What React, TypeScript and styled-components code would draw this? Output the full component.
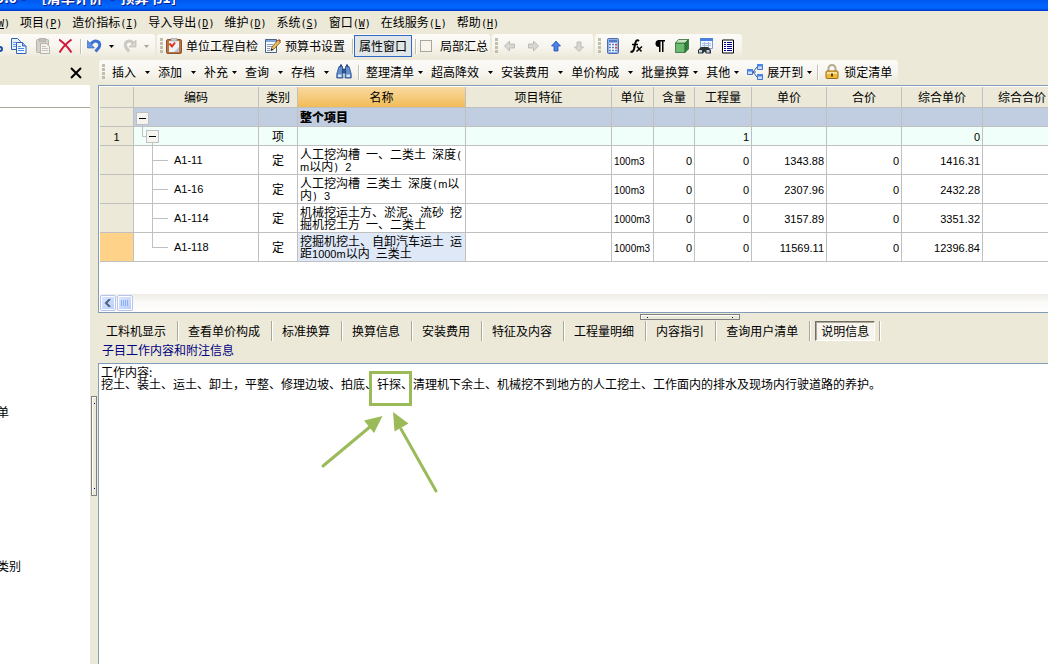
import React from "react";
import styled, { createGlobalStyle, css } from "styled-components";

const CJK = '"Noto Sans CJK SC", "Liberation Sans", sans-serif';
const LINE = "#c0c0c0";
const FACE = "#ece9d8";
const EDGE = "#7f9db9";

const GlobalStyle = createGlobalStyle`
  * { box-sizing: border-box; }
  html, body { margin: 0; height: 100%; overflow: hidden; }
  #root { height: 100%; }
  body { font: 12px/16px ${CJK}; color: #000; background: ${FACE}; }
  button { font: inherit; color: inherit; border: 0; background: none; padding: 0; margin: 0; white-space: nowrap; }
  svg { display: block; flex: none; }
`;

const Window = styled.div`
  display: flex;
  flex-direction: column;
  height: 100%;
  overflow: hidden;
`;

const TitleBar = styled.header`
  flex: none;
  display: flex;
  align-items: flex-end;
  height: 11px;
  overflow: hidden;
  background: linear-gradient(#0058ee 0%, #0066ff 55%, #0062fa 75%, #0038c8 100%);
`;

const Title = styled.h1`
  margin: 0 0 6px -4px;
  font-size: 14px;
  line-height: 16px;
  font-weight: 700;
  color: #fff;
  text-shadow: 1px 1px 0 #0a1883;
  white-space: pre;
  display: flex;
  gap: 16px;
`;

const MenuBar = styled.nav`
  flex: none;
  display: flex;
  gap: 10px;
  height: 23px;
  padding-bottom: 2px;
  margin-left: -8px;
  align-items: center;
`;

const Mono = styled.span`
  font: 10px/8px "DejaVu Sans Mono", monospace;
  white-space: pre-wrap;
`;

const Digits = styled.span<{ $small?: boolean }>`
  font: ${(p) => (p.$small ? 10 : 11)}px/8px "Liberation Sans", sans-serif;
`;

const ToolRow = styled.div<{ $last?: boolean }>`
  flex: none;
  display: flex;
  gap: 2px;
  height: 25px;
  margin-bottom: ${(p) => (p.$last ? 0 : 1)}px;
  overflow: hidden;
`;

const ToolGroup = styled.div<{ $bleed?: boolean }>`
  flex: none;
  display: flex;
  align-items: center;
  height: 100%;
  padding: 0 2px 1px 3px;
  border-radius: 3px;
  background: linear-gradient(#fcfbf8, #f7f5ee 50%, #ebe8d8);
  ${(p) => p.$bleed && css`margin-left: -17px; padding-left: 0;`}
`;

const Grip = styled.span<{ $gap?: number }>`
  width: 3px;
  height: 16px;
  margin-right: ${(p) => p.$gap ?? 1}px;
  background: repeating-linear-gradient(#c1bea9 0 3px, transparent 3px 4px);
`;

const Divider = styled.span<{ $space?: number }>`
  width: 2px;
  height: 15px;
  margin: 0 ${(p) => p.$space ?? 1}px;
  background: #c5c2b4;
  border-right: 1px solid #fff;
`;

const IconButton = styled.button<{ $compact?: boolean }>`
  padding: 0 4px 0 ${(p) => (p.$compact ? 3 : 4)}px;
`;

const LabelButton = styled.button`
  display: flex;
  align-items: center;
  gap: 4px;
  padding-right: 7px;
`;

const ToggleButton = styled.button`
  height: 22px;
  padding: 0 4px;
  margin-right: 3px;
  border: 1px solid #316ac5;
  background: #e1e6e8;
`;

const CheckLabel = styled.label`
  display: flex;
  align-items: center;
  gap: 8px;
  margin-left: 3px;
`;

const CheckBox = styled.input`
  appearance: none;
  width: 12px;
  height: 12px;
  margin: 0;
  border: 1px solid #aca899;
  background: #f6f4ec;
`;

const DropButton = styled.button<{ $wide?: boolean }>`
  display: flex;
  align-items: center;
  gap: ${(p) => (p.$wide ? 9 : 4)}px;
  padding: 0 4px;
`;

const ArrowButton = styled.button`
  padding: 0 4px 0 2px;
`;

const DockTitle = styled.div`
  flex: none;
  display: flex;
  align-items: center;
  justify-content: flex-end;
  width: 97px;
  padding-right: 15px;
`;

const Body = styled.main`
  flex: 1;
  display: flex;
  min-height: 0;
`;

const Dock = styled.aside`
  flex: none;
  width: 90px;
  background: #fff;
  overflow: hidden;
`;

const DockHead = styled.div`
  height: 23px;
  border-bottom: 1px solid #aca899;
`;

const DockList = styled.ul`
  list-style: none;
  margin: 0 0 0 -3px;
  padding: 296px 0 0;
  display: flex;
  flex-direction: column;
  gap: 138px;
`;

const VSplitter = styled.div`
  flex: none;
  width: 8px;
  padding: 311px 1px 0;
`;

const SplitGrip = styled.span<{ $vertical?: boolean }>`
  display: flex;
  flex-direction: ${(p) => (p.$vertical ? "column" : "row")};
  justify-content: space-between;
  align-items: center;
  width: ${(p) => (p.$vertical ? "6px" : "100px")};
  height: ${(p) => (p.$vertical ? "100px" : "6px")};
  padding: ${(p) => (p.$vertical ? "6px 0" : "0 6px")};
  border: 1px solid #808080;
  background: #ebe9d8;
  box-shadow: inset 1px 1px 0 #fff;
  &::before, &::after { content: ""; width: 1px; height: 1px; background: #000080; }
`;

const Work = styled.section`
  flex: 1;
  min-width: 0;
  display: flex;
  flex-direction: column;
`;

const GridPane = styled.div`
  flex: none;
  display: flex;
  flex-direction: column;
  justify-content: space-between;
  height: 228px;
  padding: 1px 0 1px 1px;
  border: 1px solid ${EDGE};
  border-right: 0;
  background: #fff;
  overflow: hidden;
`;

const Sheet = styled.table`
  table-layout: fixed;
  width: 100%;
  min-width: 962px;
  border-collapse: separate;
  border-spacing: 0;
`;

const HeadCell = styled.th<{ $active?: boolean }>`
  height: 21px;
  padding: 0 0 1px;
  font-weight: 400;
  line-height: 16px;
  border: 0 solid ${LINE};
  border-width: 0 1px 1px 0;
  background: ${(p) => (p.$active ? "linear-gradient(#fadaa0, #f0bc58)" : FACE)};
`;

type Tone = "group" | "item" | "plain";
const tones: Record<Tone, string> = { group: "#c1cde0", item: "#f0fffa", plain: "#fff" };

const Row = styled.tr<{ $tone: Tone }>`
  height: ${(p) => (p.$tone === "plain" ? 29 : 19)}px;
  background: ${(p) => tones[p.$tone]};
`;

const Cell = styled.td<{ $align?: string; $fill?: string; $flush?: boolean }>`
  padding: ${(p) => (p.$flush ? "0" : "0 2px")};
  line-height: 12px;
  white-space: nowrap;
  overflow: hidden;
  text-align: ${(p) => p.$align ?? "left"};
  background: ${(p) => p.$fill ?? "transparent"};
  border: 0 solid ${LINE};
  border-width: 0 1px 1px 0;
`;

const GroupName = styled.strong`
  font-weight: 900;
`;

const TreeNode = styled.div`
  display: flex;
  align-items: center;
  gap: 6px;
`;

const ScrollBar = styled.div`
  flex: none;
  display: flex;
  align-items: center;
  gap: 1px;
  height: 17px;
  background: linear-gradient(#efede5, #fbfaf8 50%, #fefefc);
`;

const ScrollButton = styled.button`
  display: grid;
  place-items: center;
  width: 16px;
  height: 16px;
  border: 1px solid #b4c6ee;
  border-radius: 2px;
  background: linear-gradient(135deg, #dce7fe, #b9cdf9);
  box-shadow: inset 0 0 0 1px #fff;
`;

const HSplitter = styled.div`
  flex: none;
  height: 8px;
  padding: 1px 0 0 57%;
`;

const Tabs = styled.div`
  flex: none;
  display: flex;
  align-items: center;
  height: 20px;
  padding-left: 8px;
`;

const Tab = styled.button<{ $active?: boolean }>`
  height: 20px;
  line-height: 20px;
  margin-right: 11px;
  ${(p) =>
    p.$active &&
    css`
      margin: 0 4px 0 -5px;
      padding: 0 5px;
      line-height: 18px;
      border: 1px solid #fff;
      border-top-color: #716f64;
      border-left-color: #716f64;
      box-shadow: inset 1px 1px 0 #aca899;
      background: #f6f4ec;
    `}
`;

const TabRule = styled.span`
  width: 2px;
  height: 20px;
  margin-right: 9px;
  background: #aca899;
  border-right: 1px solid #fff;
`;

const Caption = styled.h2`
  flex: none;
  margin: 0;
  height: 22px;
  padding-left: 4px;
  font-size: 12px;
  line-height: 18px;
  font-weight: 400;
  color: #000080;
`;

const NotePane = styled.article`
  flex: 1;
  position: relative;
  border: 1px solid ${EDGE};
  border-width: 1px 0 0 1px;
  background: #fff;
  padding: 2px 2px;
  line-height: 12px;
  white-space: nowrap;
  overflow: hidden;
`;

const NoteLine = styled.p`
  margin: 0;
`;

const Annotation = styled.svg`
  position: absolute;
  left: 220px;
  top: 4px;
`;

/* Latin runs use narrow faces so that they take half the width of a Han character. */
function Mixed({ text }: { text: string }) {
  return (
    <>
      {text.split(/([ ()]+|[A-Za-z0-9.\-]+)/).map((part, i) =>
        /^[ ()]+$/.test(part) ? <Mono key={i}>{part}</Mono> : /^[A-Za-z0-9.\-]+$/.test(part) ? <Digits key={i}>{part}</Digits> : part
      )}
    </>
  );
}

function Caret({ muted }: { muted?: boolean }) {
  return (
    <svg width="5" height="3" viewBox="0 0 5 3" aria-hidden="true">
      <path d="M0 0h5L2.500 3z" fill={muted ? "#aca899" : "#000"} />
    </svg>
  );
}

const glyphs: Record<string, React.ReactNode> = {
  cut: (
    <g fill="none" stroke="#1b4fa8" strokeWidth="2">
      <circle cx="4" cy="12" r="2" />
      <circle cx="13" cy="11" r="2" />
      <path d="M5 10L11 1M11 9L5 1" stroke="#555" strokeWidth="1" />
    </g>
  ),
  copy: (
    <g stroke="#2f62b5">
      <path d="M.5 .5h6l3 3v8h-9z" fill="#e6f0ff" />
      <path d="M2 4.500h5M2 6.500h5M2 8.500h5" stroke="#6fa1e8" />
      <path d="M5.500 4.500h6l3.500 3.500v7.500H5.500z" fill="#f4f9ff" />
      <path d="M11.500 4.500V8H15" fill="#9cc0f5" />
      <path d="M7 8.500h3M7 10.500h6M7 12.500h6" stroke="#4b8be8" />
    </g>
  ),
  paste: (
    <g stroke="#b5b3aa">
      <rect x="1.500" y="1.500" width="12" height="13" rx="1" fill="#d3d1c9" />
      <rect x="4.500" y=".5" width="6" height="3" fill="#c1bfb7" />
      <path d="M5.500 5.500h6l3 3v7h-9z" fill="#f3f2ee" />
      <path d="M7 8.500h4M7 10.500h6M7 12.500h6" stroke="#c6c4bc" />
    </g>
  ),
  remove: <path d="M0 1.500Q7 6 12.500 14.500M12.500 1.500Q5 7 .5 14.500" fill="none" stroke="#d2183c" strokeWidth="2" />,
  undo: (
    <>
      <path d="M4 6Q7 2 10.500 3.500T12 9.500L8.500 13.500" fill="none" stroke="#3c72cf" strokeWidth="3" />
      <path d="M.5 2.500v7.500h7z" fill="#5b93e8" stroke="#2d5db8" strokeWidth=".6" />
    </>
  ),
  redo: (
    <>
      <path d="M12 6Q9 2 5.500 3.500T4 9.500L7 13.500" fill="none" stroke="#cbc9c2" strokeWidth="3" />
      <path d="M14 2v7H7z" fill="#d6d4cd" stroke="#b9b7af" strokeWidth=".6" />
    </>
  ),
  inspect: (
    <>
      <rect x=".5" y="1.500" width="15" height="14" rx="1.500" fill="#b9743f" stroke="#8c552d" />
      <path d="M3 3h10v11H3z" fill="#eef1f8" />
      <path d="M5 0h6v3H5z" fill="#c9c9c9" stroke="#888" strokeWidth=".5" />
      <path d="M3.500 5.500l2.500 3 3-4" fill="none" stroke="#e03018" strokeWidth="2" />
      <path d="M8 14l5-5v5z" fill="#b9c1d6" />
    </>
  ),
  note: (
    <>
      <path d="M.5 1.500h11v13H.5z" fill="#f8fbff" stroke="#49617f" />
      <path d="M1 2h10v2H1z" fill="#7fa7dd" />
      <path d="M2 6.500h6M2 8.500h5M2 10.500h3M2 12.500h3" stroke="#8a9db8" />
      <path d="M6 12l1-3 6-7 2.500 2-6.500 7z" fill="#f0c050" stroke="#6a4a28" strokeWidth=".8" />
      <path d="M13 2l1-1 2 1.500-1 1.500z" fill="#c04838" />
      <path d="M5.500 13l1-2.500 2 1.500z" fill="#222" />
    </>
  ),
  left: <path d="M2.500 8l5-5v3h5v4h-5v3z" fill="#d8d7d2" stroke="#b4b3ae" strokeWidth=".8" />,
  right: <path d="M13.500 8l-5-5v3h-5v4h5v3z" fill="#d8d7d2" stroke="#b4b3ae" strokeWidth=".8" />,
  up: <path d="M8 3l4.500 5H10v5H6V8H3.500z" fill="#4a80e8" stroke="#2450b0" strokeWidth=".8" />,
  down: <path d="M8 13.500L3.500 9H6V4h4v5h2.500z" fill="#d8d7d2" stroke="#b4b3ae" strokeWidth=".8" />,
  calc: (
    <>
      <rect x="2.500" y=".5" width="11" height="15" rx="1" fill="#8fb0e8" stroke="#4a6ca8" />
      <path d="M4 2h8v2H4z" fill="#4f78c4" />
      <path d="M4 5h8v9H4z" fill="#f2f6ff" />
      <path d="M4 6.500h8M4 9.500h8M4 12.500h8" stroke="#5a80cc" strokeWidth="1.500" strokeDasharray="2 1" />
      <path d="M10 6h2v1.500h-2zM10 9h2v1.500h-2z" fill="#e04830" />
    </>
  ),
  fx: (
    <g fill="none" stroke="#000">
      <path d="M11 3Q8.500 1 7.500 4.500L6 11Q5 14.500 2.500 13.500" strokeWidth="2" />
      <path d="M4 6.500h6" strokeWidth="1.500" />
      <path d="M9 8.500l4.500 5M14 8.500L8.500 13.500" strokeWidth="1.500" />
    </g>
  ),
  para: (
    <>
      <path d="M8 2a3.500 3.500 0 0 0 0 7z" />
      <path d="M7 2h7v1.500H7zM8 2h1.500v12H8zM11 2h1.500v12H11z" />
    </>
  ),
  cube: (
    <g stroke="#2f6b35" strokeWidth=".8">
      <path d="M1.500 5h9.500v9.500H1.500z" fill="#6bbb70" />
      <path d="M1.500 5l3-3.500h10L11 5z" fill="#c3e8bb" />
      <path d="M11 5l3.500-3.500v9.500L11 14.500z" fill="#2f7d3a" />
    </g>
  ),
  finder: (
    <>
      <path d="M3.500 .5h12v10h-12z" fill="#f2f7ff" stroke="#7f9fd0" />
      <path d="M3 0h13v3H3z" fill="#4b80dc" />
      <path d="M5 5.500h9M5 7.500h9M7.500 4v6M11.500 4v6" stroke="#a9bfe2" />
      <path d="M1 12l3-3h7l3 3v3.500H9l-1.500-2-1.500 2H1z" fill="#2f3338" />
      <path d="M2 12h3v2.500H2zM9.500 12h3v2.500h-3z" fill="#b8d8e8" />
    </>
  ),
  list: (
    <>
      <path d="M2.500 2h11v13h-11z" fill="#fff" stroke="#000" strokeWidth="1" />
      <path d="M4 4.500h2M7 4.500h5M4 6.500h2M7 6.500h5M4 8.500h2M7 8.500h5M4 10.500h2M7 10.500h5M4 12.500h2M7 12.500h5" stroke="#000090" />
    </>
  ),
  binoculars: (
    <g stroke="#24457c" strokeWidth=".8">
      <path d="M3 2.500h3.500v4L7 14H.8v-4z" fill="#5f8fd0" />
      <path d="M9.500 2.500H13L15.200 10v4H9l.5-7.500z" fill="#5f8fd0" />
      <path d="M6.500 5h3v4h-3z" fill="#34588f" />
      <path d="M2 10.500h3.500v2.500H2zM10.500 10.500H14v2.500h-3.500z" fill="#d3e6fb" stroke="none" />
      <path d="M4 1.500h2M10 1.500h2" strokeWidth="2" />
    </g>
  ),
  tree: (
    <>
      <path d="M6 8h3M6 8l4-5M6 8l4 5" stroke="#34589a" fill="none" />
      <g fill="#cfe0fb" stroke="#3f74cc">
        <path d="M.5 5.500h5v5h-5zM10.500 .5h5v5h-5zM10.500 10.500h5v5h-5z" />
      </g>
      <path d="M0 5h6v2.500H0zM10 0h6v2.500h-6zM10 10h6v2.500h-6z" fill="#4b86e4" />
    </>
  ),
  lock: (
    <>
      <path d="M4.500 8V4.500a3.500 3.500 0 0 1 7 0V8" fill="none" stroke="#b3a98c" strokeWidth="2" />
      <rect x="2" y="7" width="12" height="7.500" rx="1" fill="#efb93a" stroke="#9c6f1c" />
      <path d="M3 8h10v2H3z" fill="#fbe29a" />
      <path d="M7 9.500h2v3H7z" fill="#5c430f" />
    </>
  ),
};

function Glyph({ name }: { name: string }) {
  return (
    <svg width="16" height="16" viewBox="0 0 16 16" aria-hidden="true">
      {glyphs[name]}
    </svg>
  );
}

function Tool({ name, label, compact }: { name: string; label: string; compact?: boolean }) {
  return (
    <IconButton $compact={compact} aria-label={label}>
      <Glyph name={name} />
    </IconButton>
  );
}

function Drop({ label, wide, icon }: { label: string; wide?: boolean; icon?: string }) {
  return (
    <DropButton $wide={wide} aria-haspopup="menu">
      {icon && <Glyph name={icon} />}
      {label}
      <Caret />
    </DropButton>
  );
}

function Expander() {
  return (
    <g>
      <rect x=".5" y=".5" width="12" height="12" fill="#f5f4ef" stroke={LINE} />
      <path d="M3 6.500h7" stroke="#000" />
    </g>
  );
}

const menus: [string, string][] = [
  ["", "W"],
  ["项目", "P"],
  ["造价指标", "I"],
  ["导入导出", "D"],
  ["维护", "D"],
  ["系统", "S"],
  ["窗口", "W"],
  ["在线服务", "L"],
  ["帮助", "H"],
];

const columns: [string, number | undefined][] = [
  ["", 34],
  ["编码", 125],
  ["类别", 39],
  ["名称", 168],
  ["项目特征", 146],
  ["单位", 42],
  ["含量", 41],
  ["工程量", 57],
  ["单价", 75],
  ["合价", 75],
  ["综合单价", 81],
  ["综合合价", undefined],
];

const quotas = [
  { code: "A1-11", name: ["人工挖沟槽 一、二类土 深度(", "m以内) 2"], unit: "100m3", price: "1343.88", total: "1416.31" },
  { code: "A1-16", name: ["人工挖沟槽 三类土 深度(m以", "内) 3"], unit: "100m3", price: "2307.96", total: "2432.28" },
  { code: "A1-114", name: ["机械挖运土方、淤泥、流砂 挖", "掘机挖土方 一、二类土"], unit: "1000m3", price: "3157.89", total: "3351.32" },
  { code: "A1-118", name: ["挖掘机挖土、自卸汽车运土 运", "距1000m以内 三类土"], unit: "1000m3", price: "11569.11", total: "12396.84" },
];

const tabs = ["工料机显示", "查看单价构成", "标准换算", "换算信息", "安装费用", "特征及内容", "工程量明细", "内容指引", "查询用户清单", "说明信息"];

function Blank({ count }: { count: number }) {
  return (
    <>
      {Array.from({ length: count }, (_, i) => (
        <Cell key={i} />
      ))}
    </>
  );
}

export default function App() {
  return (
    <Window>
      <GlobalStyle />
      <TitleBar>
        <Title>
          <span>9.0 -</span>
          <span>[清单计价  -  预算书1]</span>
        </Title>
      </TitleBar>
      <MenuBar>
        {menus.map(([label, key]) => (
          <button key={label}>
            {label}
            <Mono>
              (<u>{key}</u>)
            </Mono>
          </button>
        ))}
      </MenuBar>

      <ToolRow>
        <ToolGroup $bleed>
          <Tool name="cut" label="剪切" />
          <Tool name="copy" label="复制" />
          <Tool name="paste" label="粘贴" />
          <Tool name="remove" label="删除" />
          <Divider />
          <Tool name="undo" label="撤销" />
          <ArrowButton aria-label="撤销列表"><Caret /></ArrowButton>
          <Tool name="redo" label="恢复" />
          <ArrowButton aria-label="恢复列表"><Caret muted /></ArrowButton>
        </ToolGroup>
        <ToolGroup>
          <Grip $gap={3} />
          <LabelButton><Glyph name="inspect" />单位工程自检</LabelButton>
          <LabelButton><Glyph name="note" />预算书设置</LabelButton>
          <Divider $space={0} />
          <ToggleButton aria-pressed="true">属性窗口</ToggleButton>
          <Divider $space={0} />
          <CheckLabel>
            <CheckBox type="checkbox" />
            局部汇总
          </CheckLabel>
        </ToolGroup>
        <ToolGroup>
          <Grip />
          <Tool compact name="left" label="左移" />
          <Tool compact name="right" label="右移" />
          <Tool compact name="up" label="上移" />
          <Tool compact name="down" label="下移" />
        </ToolGroup>
        <ToolGroup>
          <Grip />
          <Tool compact name="calc" label="计算器" />
          <Tool compact name="fx" label="函数" />
          <Tool compact name="para" label="段落" />
          <Tool compact name="cube" label="图元" />
          <Tool compact name="finder" label="查找" />
          <Tool compact name="list" label="列表" />
        </ToolGroup>
      </ToolRow>

      <ToolRow $last>
        <DockTitle>
          <button aria-label="关闭">
            <svg width="12" height="12" viewBox="0 0 12 12" aria-hidden="true">
              <path d="M1 1l10 10M11 1L1 11" stroke="#000" strokeWidth="2" />
            </svg>
          </button>
        </DockTitle>
        <ToolGroup>
          <Grip $gap={3} />
          <Drop label="插入" wide />
          <Drop label="添加" wide />
          <Drop label="补充" />
          <Drop label="查询" wide />
          <Drop label="存档" wide />
          <Tool compact name="binoculars" label="查找" />
          <Divider $space={2} />
          <Drop label="整理清单" />
          <Drop label="超高降效" wide />
          <Drop label="安装费用" wide />
          <Drop label="单价构成" wide />
          <Drop label="批量换算" />
          <Drop label="其他" />
          <Drop label="展开到" icon="tree" />
          <Divider />
          <DropButton><Glyph name="lock" />锁定清单</DropButton>
        </ToolGroup>
      </ToolRow>

      <Body>
        <Dock>
          <DockHead />
          <DockList>
            <li>单</li>
            <li>类别</li>
          </DockList>
        </Dock>
        <VSplitter>
          <SplitGrip $vertical />
        </VSplitter>
        <Work>
          <GridPane>
            <Sheet>
              <colgroup>
                {columns.map(([label, width], i) => (
                  <col key={i} width={width} />
                ))}
              </colgroup>
              <thead>
                <tr>
                  {columns.map(([label], i) => (
                    <HeadCell key={i} $active={label === "名称"}>{label}</HeadCell>
                  ))}
                </tr>
              </thead>
              <tbody>
                <Row $tone="group">
                  <Cell $fill={FACE} />
                  <Cell $flush>
                    <svg width="30" height="18" viewBox="0 0 30 18" aria-hidden="true">
                      <path d="M8.500 16v2" stroke={LINE} />
                      <g transform="translate(2 4)"><Expander /></g>
                    </svg>
                  </Cell>
                  <Cell />
                  <Cell><GroupName>整个项目</GroupName></Cell>
                  <Blank count={8} />
                </Row>
                <Row $tone="item">
                  <Cell $fill={FACE} $align="center"><Digits>1</Digits></Cell>
                  <Cell $flush>
                    <svg width="30" height="18" viewBox="0 0 30 18" aria-hidden="true">
                      <path d="M8.500 0v9.500h4M18.500 15v3" stroke={LINE} fill="none" />
                      <g transform="translate(12 3)"><Expander /></g>
                    </svg>
                  </Cell>
                  <Cell $align="center">项</Cell>
                  <Blank count={4} />
                  <Cell $align="right"><Digits>1</Digits></Cell>
                  <Blank count={2} />
                  <Cell $align="right"><Digits>0</Digits></Cell>
                  <Cell />
                </Row>
                {quotas.map((q, i) => {
                  const last = i === quotas.length - 1;
                  return (
                    <Row key={q.code} $tone="plain">
                      <Cell $fill={last ? "#ffd28a" : FACE} />
                      <Cell $flush>
                        <TreeNode>
                          <svg width="34" height="28" viewBox="0 0 34 28" aria-hidden="true">
                            <path d={`M18.500 0V${last ? 14 : 28}M18 14.500h16`} stroke={LINE} />
                          </svg>
                          <Digits>{q.code}</Digits>
                        </TreeNode>
                      </Cell>
                      <Cell $align="center">定</Cell>
                      <Cell $fill={last ? "#dfe8f6" : undefined}>
                        <Mixed text={q.name[0]} />
                        <br />
                        <Mixed text={q.name[1]} />
                      </Cell>
                      <Cell />
                      <Cell><Digits $small>{q.unit}</Digits></Cell>
                      <Cell $align="right"><Digits>0</Digits></Cell>
                      <Cell $align="right"><Digits>0</Digits></Cell>
                      <Cell $align="right"><Digits>{q.price}</Digits></Cell>
                      <Cell $align="right"><Digits>0</Digits></Cell>
                      <Cell $align="right"><Digits>{q.total}</Digits></Cell>
                      <Cell />
                    </Row>
                  );
                })}
              </tbody>
            </Sheet>
            <ScrollBar>
              <ScrollButton aria-label="向左滚动">
                <svg width="8" height="8" viewBox="0 0 8 8" aria-hidden="true">
                  <path d="M6 0L2 4l4 4" fill="none" stroke="#4d6185" strokeWidth="2" />
                </svg>
              </ScrollButton>
              <ScrollButton aria-label="滚动滑块">
                <svg width="8" height="8" viewBox="0 0 8 8" aria-hidden="true">
                  <path d="M.5 1v6M2.500 1v6M4.500 1v6M6.500 1v6" stroke="#8cb0f8" />
                </svg>
              </ScrollButton>
            </ScrollBar>
          </GridPane>
          <HSplitter>
            <SplitGrip />
          </HSplitter>
          <Tabs role="tablist">
            {tabs.map((t, i) => (
              <React.Fragment key={t}>
                <Tab role="tab" aria-selected={i === tabs.length - 1} $active={i === tabs.length - 1}>{t}</Tab>
                <TabRule />
              </React.Fragment>
            ))}
          </Tabs>
          <Caption>子目工作内容和附注信息</Caption>
          <NotePane>
            <NoteLine>工作内容:</NoteLine>
            <NoteLine>挖土、装土、运土、卸土，平整、修理边坡、拍底、钎探、清理机下余土、机械挖不到地方的人工挖土、工作面内的排水及现场内行驶道路的养护。</NoteLine>
            <Annotation width="124" height="126" viewBox="319 368 124 126" aria-hidden="true">
              <g fill="none" stroke="#9bbb59" strokeWidth="3" strokeLinecap="round">
                <rect x="370.500" y="372.500" width="40" height="32" />
                <path d="M323 466L371 426M436 491L401 429" />
              </g>
              <path d="M382.500 416L364 420.500L374 433zM393 412L394.500 431.500L408.500 423.500z" fill="#9bbb59" />
            </Annotation>
          </NotePane>
        </Work>
      </Body>
    </Window>
  );
}
